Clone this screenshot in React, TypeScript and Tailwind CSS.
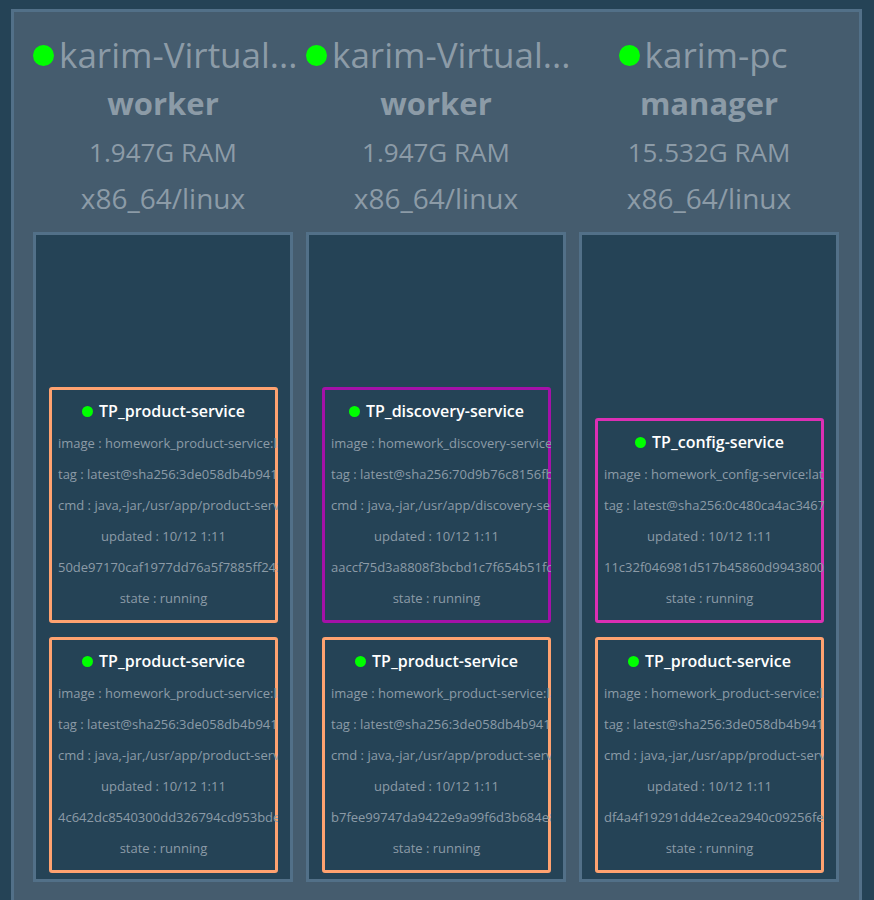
type Task = {
  name: string;
  border: string;
  details: string[];
};

type SwarmNode = {
  id: string;
  hostname: string;
  role: string;
  memory: string;
  tasks: Task[];
};

const product = (container: string): Task => ({
  name: "TP_product-service",
  border: "border-[#ffa270]",
  details: [
    "image : homework_product-service:latest",
    "tag : latest@sha256:3de058db4b9417",
    "cmd : java,-jar,/usr/app/product-service.jar",
    "updated : 10/12 1:11",
    container,
    "state : running",
  ],
});

const nodes: SwarmNode[] = [
  {
    id: "node-1",
    hostname: "karim-Virtual...",
    role: "worker",
    memory: "1.947G RAM",
    tasks: [
      product("50de97170caf1977dd76a5f7885ff243"),
      product("4c642dc8540300dd326794cd953bde0"),
    ],
  },
  {
    id: "node-2",
    hostname: "karim-Virtual...",
    role: "worker",
    memory: "1.947G RAM",
    tasks: [
      {
        name: "TP_discovery-service",
        border: "border-[#a511a8]",
        details: [
          "image : homework_discovery-service:latest",
          "tag : latest@sha256:70d9b76c8156fb0",
          "cmd : java,-jar,/usr/app/discovery-service.jar",
          "updated : 10/12 1:11",
          "aaccf75d3a8808f3bcbd1c7f654b51fc0",
          "state : running",
        ],
      },
      product("b7fee99747da9422e9a99f6d3b684e80"),
    ],
  },
  {
    id: "node-3",
    hostname: "karim-pc",
    role: "manager",
    memory: "15.532G RAM",
    tasks: [
      {
        name: "TP_config-service",
        border: "border-[#dc2fb4]",
        details: [
          "image : homework_config-service:latest",
          "tag : latest@sha256:0c480ca4ac3467",
          "updated : 10/12 1:11",
          "11c32f046981d517b45860d9943800",
          "state : running",
        ],
      },
      product("df4a4f19291dd4e2cea2940c09256fe"),
    ],
  },
];

function TaskCard({ task }: { task: Task }) {
  return (
    <li className={`rounded-[3px] border-3 pt-[5px] pb-[6px] pl-[6px] ${task.border}`}>
      <h3 className="mb-px flex h-[32px] items-center justify-center gap-[6px] pr-[6px] text-[16px] font-semibold text-white">
        <span className="size-[11px] shrink-0 rounded-full bg-[#00ff00]" />
        {task.name}
      </h3>
      <ul className="-mr-[3px] overflow-hidden pr-[9px] text-center text-[13px] leading-[31px] whitespace-nowrap">
        {task.details.map((line) => (
          <li key={line}>{line}</li>
        ))}
      </ul>
    </li>
  );
}

function NodeColumn({ node }: { node: SwarmNode }) {
  return (
    <section className="flex min-w-0 flex-col">
      <header className="text-center">
        <h2 className="flex h-[48px] items-center justify-center-safe gap-[5px] pr-[12px] text-[35px] leading-[48px] whitespace-nowrap">
          <span className="size-[21px] shrink-0 rounded-full bg-[#00ff00]" />
          <span>{node.hostname}</span>
        </h2>
        <p className="text-[31px] leading-[48px] font-bold">{node.role}</p>
        <p className="text-[26px] leading-[50px]">{node.memory}</p>
        <p className="text-[28px] leading-[42px]">x86_64/linux</p>
      </header>
      <ul className="mt-[13px] flex min-h-[650px] flex-col justify-end gap-[14px] border-3 border-[#527088] bg-[#254356] pr-[12px] pb-[6px] pl-[13px]">
        {node.tasks.map((task) => (
          <TaskCard key={task.name + task.details.join()} task={task} />
        ))}
      </ul>
    </section>
  );
}

export default function App() {
  return (
    <div className="min-h-screen overflow-hidden bg-[#254356] pt-[9px] pr-[12px] pl-[11px] font-['Open_Sans',sans-serif] text-[#8c9ba7]">
      <main className="grid min-h-screen grid-cols-3 items-start gap-[13px] border-3 border-[#527088] bg-[#455c6e] pt-[19px] pr-[20px] pb-[19px] pl-[19px]">
        {nodes.map((node) => (
          <NodeColumn key={node.id} node={node} />
        ))}
      </main>
    </div>
  );
}
